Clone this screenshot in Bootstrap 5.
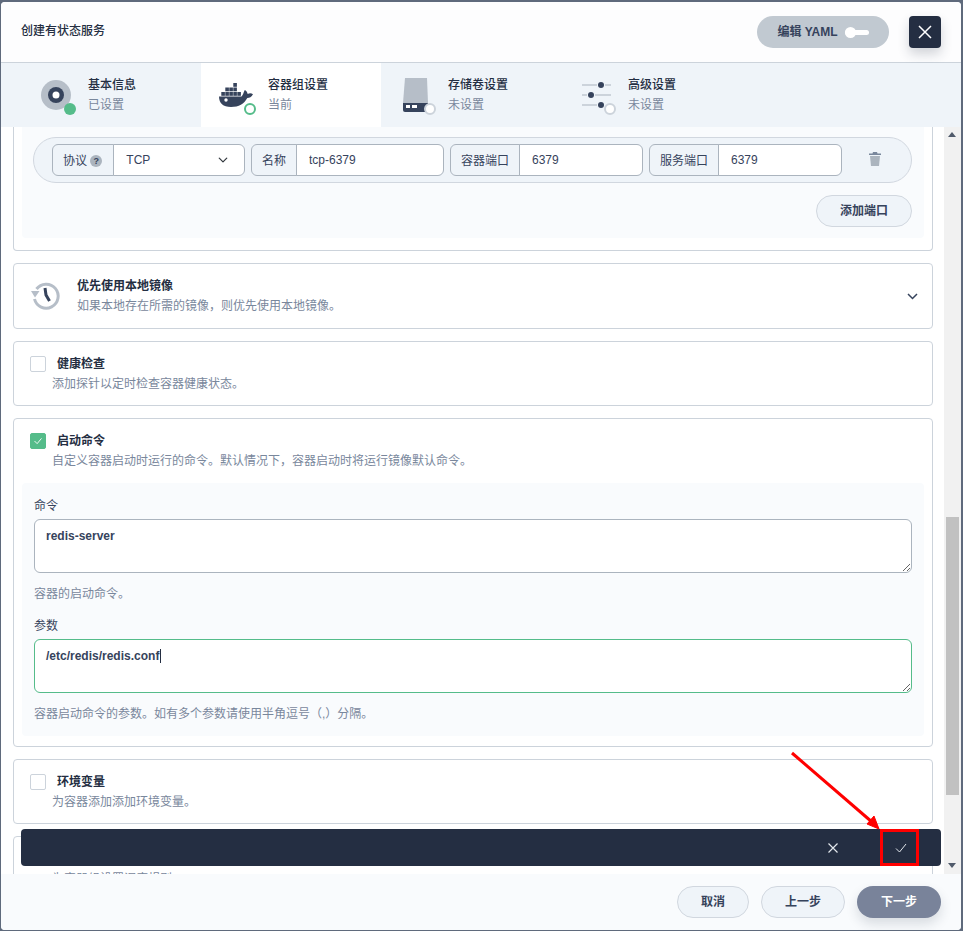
<!DOCTYPE html>
<html lang="zh-CN">
<head>
  <meta charset="UTF-8">
  <title>创建有状态服务</title>
  <link href="https://cdn.jsdelivr.net/npm/bootstrap@5.3.2/dist/css/bootstrap.min.css" rel="stylesheet">
  <style>
    html, body { height: 100%; overflow: hidden; }
    body {
      margin: 0;
      background: #5f6a7c;
      color: #242e42;
      font-family: "Liberation Sans", "Noto Sans CJK SC", sans-serif;
      font-size: 12px;
      line-height: 20px;
    }
    .shell {
      position: relative;
      display: flex;
      flex-direction: column;
      width: 960px;
      height: 928px;
      margin: 2px 0 0 1px;
      background: #fff;
      border-radius: 4px;
      overflow: hidden;
    }

    /* header */
    .top-bar { height: 61px; padding: 14px 20px 0 20px; background: #fdfdfe; border-bottom: 1px solid #ccd3db; flex: none; }
    .top-title { font-weight: 500; line-height: 30px; }
    .top-actions { gap: 20px; }
    .yaml-btn { width: 132px; height: 32px; border-radius: 16px; background: #c1c9d1; color: #36435c; font-weight: 600; gap: 7px; }
    .yaml-switch { position: relative; display: block; width: 24px; height: 5px; background: #fff; border-radius: 3px; }
    .yaml-switch::before { content: ""; position: absolute; left: 0; top: -3px; width: 11px; height: 11px; border-radius: 50%; background: #fff; }
    .close-btn { width: 32px; height: 32px; border-radius: 4px; background: #242e42; box-shadow: 0 6px 12px rgba(36, 46, 66, .2); }

    /* steps */
    .step-bar { height: 64px; padding-left: 20px; background: #eff4f9; flex: none; }
    .step-tab { width: 180px; height: 64px; padding-left: 17px; gap: 13px; }
    .step-tab.is-on { background: #fff; }
    .step-icon { width: 37px; height: 40px; flex: none; margin-top: 14px; overflow: visible; }
    .step-text { padding-top: 12px; }
    .step-name { font-weight: 500; }
    .step-state { color: #79879c; }

    /* scrolling body */
    .body-wrap { position: relative; flex: 1 1 auto; min-height: 0; }
    .body-scroll { flex: 1 1 auto; min-width: 0; padding: 0 11px 0 12px; overflow: hidden; }
    .fake-scroll { position: relative; width: 17px; flex: none; background: #f1f1f1; }
    .fake-thumb { position: absolute; left: 2px; right: 2px; top: 390px; height: 278px; background: #c1c1c1; }
    .arrow-up, .arrow-down { position: absolute; left: 4px; width: 0; height: 0; border-left: 4px solid transparent; border-right: 4px solid transparent; }
    .arrow-up { top: 5px; border-bottom: 5px solid #505a6b; }
    .arrow-down { bottom: 6px; border-top: 5px solid #505a6b; }

    .box { border: 1px solid #ccd3db; border-radius: 4px; margin-bottom: 12px; background: #fff; }
    .box-first { border-top: 0; border-radius: 0 0 4px 4px; padding: 0 8px 12px; margin-bottom: 12px; }
    .inner-panel { background: #f9fbfd; border-radius: 0 0 4px 4px; padding: 10px 12px 11px 11px; }
    .port-pill { height: 46px; padding: 0 69px 0 18px; gap: 6px; background: #eff4f9; border: 1px solid #d1d7df; border-radius: 23px; position: relative; }
    .port-pill .input-group { flex: 1 1 0; width: auto; height: 32px; }
    .port-pill .input-group-text { padding: 2px 10px 0; font-size: 12px; background: #eff4f9; color: #36435c; border-color: #abb4be; line-height: 28px; }
    .port-pill .proto-label { padding-right: 11px; }
    .port-pill .form-control, .port-pill .form-select { height: 32px; min-height: 0; padding: 0 12px; font-size: 12px; color: #36435c; border-color: #abb4be; box-shadow: none; }
    .port-pill .form-select { background-position: right 15px center; background-size: 12px 10px; }
    .help-dot { display: inline-block; width: 12px; height: 12px; border-radius: 50%; background: #abb4be; color: #36435c; font-size: 9px; line-height: 12px; text-align: center; font-weight: 700; vertical-align: -1px; }
    .trash-at { position: absolute; right: 30px; top: 14px; display: block; }
    .soft-btn { height: 32px; border-radius: 16px; background: #eff4f9; border: 1px solid #d1d7df; color: #36435c; font-size: 12px; font-weight: 600; padding: 0; line-height: 30px; }
    .soft-btn:hover { background: #eff4f9; color: #36435c; border-color: #d1d7df; }
    .add-btn { width: 96px; margin-top: 12px; }
    .cancel-btn { width: 72px; }
    .prev-btn { width: 84px; }

    .row-title { font-weight: 600; }
    .row-desc { color: #79879c; }
    .local-box { height: 66px; padding: 12px 17px 0 16px; }
    .history-icon { flex: none; margin: 4px 15px 0 0; }
    .fold-icon { margin: 17px -3px 0 0; }
    .check-box { padding: 12px 16px 0 16px; height: 65px; }
    .check-box .form-check-input { width: 16px; height: 16px; margin: 2px 11px 0 0; border-radius: 2px; border-color: #ccd3db; box-shadow: none; flex: none; }
    .check-box .form-check-input:checked {
      background-color: #55bc8a;
      border-color: #55bc8a;
      background-image: url("data:image/svg+xml,%3csvg xmlns='http://www.w3.org/2000/svg' viewBox='0 0 16 16'%3e%3cpath fill='none' stroke='%23fff' stroke-width='1' d='M4 8l3 3 5-6'/%3e%3c/svg%3e");
    }
    .check-desc { margin: 0 0 0 22px; }
    .cmd-box { height: 329px; padding: 0; }
    .cmd-head { height: auto; }
    .cmd-panel { margin: 12px 8px 0; padding: 12px 12px 0 12px; height: 253px; background: #f9fbfd; border-radius: 4px; }
    .cmd-panel .form-label { font-size: 12px; color: #36435c; margin-bottom: 3px; display: block; }
    .cmd-panel .form-label.first-label { padding-top: 1px; }
    .cmd-panel .form-control { height: 54px; min-height: 0; padding: 6px 11px; font-size: 12px; font-weight: 600; color: #36435c; border-color: #abb4be; box-shadow: none; line-height: 20px; }
    .cmd-panel .is-typing { border-color: #55bc8a; }
    .cmd-panel .form-text { margin: 11px 0 12px; font-size: 12px; color: #79879c; line-height: 20px; }
    .caret-wrap { position: relative; }
    .caret-line { position: absolute; left: 126px; top: 10px; width: 1px; height: 14px; background: #242e42; }
    .last-box { height: 60px; margin-bottom: 0; }
    .check-box.last-box .form-check-input { margin-top: 0; }

    /* dark confirm bar */
    .confirm-bar { position: absolute; left: 20px; top: 702px; width: 920px; height: 37px; background: #242e42; border-radius: 4px; z-index: 2; padding-right: 34px; gap: 57px; }

    /* footer */
    .foot-bar { height: 56px; padding: 12px 20px 0 0; gap: 12px; background: #f9fbfd; flex: none; }
    .next-btn { width: 84px; height: 32px; border-radius: 16px; background: #79839a; border: 0; color: #fff; font-size: 12px; font-weight: 600; box-shadow: 0 6px 12px rgba(36, 46, 66, .15); padding: 0; }
    .note-layer { position: absolute; left: 0; top: 0; width: 963px; height: 931px; pointer-events: none; z-index: 5; }
  </style>
</head>
<body>

<div class="shell">
  <!-- Header -->
  <div class="top-bar d-flex justify-content-between">
    <div class="top-title">创建有状态服务</div>
    <div class="top-actions d-flex ms-auto">
      <div class="yaml-btn d-flex align-items-center justify-content-center">
        <span>编辑 YAML</span>
        <span class="yaml-switch"></span>
      </div>
      <div class="close-btn d-flex align-items-center justify-content-center">
        <svg width="14" height="14" viewBox="0 0 14 14"><path d="M1 1 L13 13 M13 1 L1 13" stroke="#fff" stroke-width="1.5" fill="none"/></svg>
      </div>
    </div>
  </div>

  <!-- Steps -->
  <div class="step-bar d-flex">
    <div class="step-tab d-flex">
      <svg class="step-icon" viewBox="0 0 37 40">
        <circle cx="18" cy="18" r="15" fill="#b6bec8"/>
        <circle cx="18" cy="18" r="8" fill="#36435c"/>
        <circle cx="18" cy="18" r="3.5" fill="#fff"/>
        <circle cx="32" cy="32" r="6" fill="#55bc8a"/>
      </svg>
      <div class="step-text">
        <div class="step-name">基本信息</div>
        <div class="step-state">已设置</div>
      </div>
    </div>
    <div class="step-tab d-flex is-on">
      <svg class="step-icon" viewBox="0 0 37 40">
        <g fill="#36435c">
          <rect x="15.300" y="6" width="3.600" height="3.800"/>
          <rect x="7.300" y="10.500" width="3.600" height="3.800"/><rect x="11.300" y="10.500" width="3.600" height="3.800"/><rect x="15.300" y="10.500" width="3.600" height="3.800"/>
          <rect x="3.300" y="15" width="3.600" height="3.800"/><rect x="7.300" y="15" width="3.600" height="3.800"/><rect x="11.300" y="15" width="3.600" height="3.800"/><rect x="15.300" y="15" width="3.600" height="3.800"/><rect x="19.300" y="15" width="3.600" height="3.800"/>
          <path d="M1 19.500 H23.500 C25 18 25.500 15.500 26.800 13 C28.500 14 29.500 15.500 29.700 17 C31.500 16 33.500 16.200 35 17.200 C33.500 20 31.500 21 29.300 21 C26 27 21 30 13 30 C5 30 1 26 1 19.500 Z"/>
        </g>
        <circle cx="8" cy="23" r="1.700" fill="#fff"/>
        <circle cx="32" cy="32" r="5" fill="#fff" stroke="#55bc8a" stroke-width="2"/>
      </svg>
      <div class="step-text">
        <div class="step-name">容器组设置</div>
        <div class="step-state">当前</div>
      </div>
    </div>
    <div class="step-tab d-flex">
      <svg class="step-icon" viewBox="0 0 37 40">
        <path d="M7 1 H29 L30 26 H5 Z" fill="#b6bec8"/>
        <path d="M5 26 H30 V33 Q30 35 28 35 H7 Q5 35 5 33 Z" fill="#36435c"/>
        <rect x="8" y="28" width="4" height="3" fill="#fff"/><rect x="14" y="28" width="5" height="3" fill="#fff"/>
        <circle cx="32" cy="32" r="5" fill="#fff" stroke="#ccd3db" stroke-width="2"/>
      </svg>
      <div class="step-text">
        <div class="step-name">存储卷设置</div>
        <div class="step-state">未设置</div>
      </div>
    </div>
    <div class="step-tab d-flex">
      <svg class="step-icon" viewBox="0 0 37 40">
        <g stroke="#ccd3db" stroke-width="2" fill="none">
          <path d="M4 8 H19 M27 8 H33"/><path d="M4 18 H9 M17 18 H33"/><path d="M4 28 H19"/>
        </g>
        <circle cx="23" cy="8" r="3" fill="#36435c"/>
        <circle cx="13" cy="18" r="3" fill="#36435c"/>
        <circle cx="23" cy="28" r="3" fill="#36435c"/>
        <circle cx="32" cy="32" r="5" fill="#fff" stroke="#ccd3db" stroke-width="2"/>
      </svg>
      <div class="step-text">
        <div class="step-name">高级设置</div>
        <div class="step-state">未设置</div>
      </div>
    </div>
  </div>

  <!-- Body -->
  <div class="body-wrap d-flex">
    <div class="body-scroll">

      <div class="box box-first">
        <div class="inner-panel">
          <div class="port-pill d-flex align-items-center">
            <div class="input-group">
              <span class="input-group-text proto-label">协议&nbsp;<span class="help-dot">?</span></span>
              <select class="form-select"><option>TCP</option></select>
            </div>
            <div class="input-group">
              <span class="input-group-text">名称</span>
              <input class="form-control" value="tcp-6379">
            </div>
            <div class="input-group">
              <span class="input-group-text">容器端口</span>
              <input class="form-control" value="6379">
            </div>
            <div class="input-group">
              <span class="input-group-text">服务端口</span>
              <input class="form-control" value="6379">
            </div>
            <svg class="trash-at" width="12" height="14" viewBox="0 0 12 14"><path d="M4 0 H8 L8.500 1.500 H12 V3 H0 V1.500 H3.500 Z" fill="#79879c"/><path d="M1 4 H11 L10 14 H2 Z" fill="#abb4be"/></svg>
          </div>
          <div class="d-flex justify-content-end">
            <button class="btn soft-btn add-btn">添加端口</button>
          </div>
        </div>
      </div>

      <div class="box local-box d-flex align-items-start">
        <svg class="history-icon" width="32" height="32" viewBox="0 0 32 32">
          <path d="M6.500 9 A12 12 0 1 1 4.500 19" fill="none" stroke="#b6bec8" stroke-width="3"/>
          <path d="M1 11 L9.500 11 L5 17.500 Z" fill="#b6bec8"/>
          <path d="M15 8 L16 15 L19.500 21" fill="none" stroke="#36435c" stroke-width="3"/>
        </svg>
        <div class="flex-grow-1">
          <div class="row-title">优先使用本地镜像</div>
          <div class="row-desc">如果本地存在所需的镜像，则优先使用本地镜像。</div>
        </div>
        <svg class="fold-icon" width="11" height="7" viewBox="0 0 11 7"><path d="M1 1 L5.500 5.500 L10 1" fill="none" stroke="#36435c" stroke-width="1.500"/></svg>
      </div>

      <div class="box check-box">
        <div class="d-flex">
          <input class="form-check-input" type="checkbox">
          <div class="row-title">健康检查</div>
        </div>
        <div class="row-desc check-desc">添加探针以定时检查容器健康状态。</div>
      </div>

      <div class="box cmd-box">
        <div class="check-box cmd-head">
          <div class="d-flex">
            <input class="form-check-input" type="checkbox" checked>
            <div class="row-title">启动命令</div>
          </div>
          <div class="row-desc check-desc">自定义容器启动时运行的命令。默认情况下，容器启动时将运行镜像默认命令。</div>
        </div>
        <div class="cmd-panel">
          <label class="form-label first-label">命令</label>
          <textarea class="form-control">redis-server</textarea>
          <div class="form-text">容器的启动命令。</div>
          <label class="form-label">参数</label>
          <div class="caret-wrap">
            <textarea class="form-control is-typing">/etc/redis/redis.conf</textarea>
            <span class="caret-line"></span>
          </div>
          <div class="form-text">容器启动命令的参数。如有多个参数请使用半角逗号（,）分隔。</div>
        </div>
      </div>

      <div class="box check-box">
        <div class="d-flex">
          <input class="form-check-input" type="checkbox">
          <div class="row-title">环境变量</div>
        </div>
        <div class="row-desc check-desc">为容器添加添加环境变量。</div>
      </div>

      <div class="box check-box last-box">
        <div class="d-flex">
          <input class="form-check-input" type="checkbox">
          <div class="row-title">容器组调度</div>
        </div>
        <div class="row-desc check-desc">为容器组设置调度规则。</div>
      </div>
    </div>

    <div class="fake-scroll">
      <span class="arrow-up"></span>
      <span class="fake-thumb"></span>
      <span class="arrow-down"></span>
    </div>

    <div class="confirm-bar d-flex align-items-center justify-content-end">
      <svg width="10" height="10" viewBox="0 0 10 10"><path d="M.5 .5 L9.500 9.500 M9.500 .5 L.5 9.500" stroke="#e3e7ec" stroke-width="1.200" fill="none"/></svg>
      <svg width="12" height="10" viewBox="0 0 12 10"><path d="M1 5.500 L4.500 9 L11 1" stroke="#e3e7ec" stroke-width="1" fill="none"/></svg>
    </div>
  </div>

  <!-- Footer -->
  <div class="foot-bar d-flex justify-content-end">
    <button class="btn soft-btn cancel-btn">取消</button>
    <button class="btn soft-btn prev-btn">上一步</button>
    <button class="btn next-btn">下一步</button>
  </div>
</div>

<!-- Red annotation drawn on the screenshot -->
<svg class="note-layer" viewBox="0 0 963 931">
  <path d="M792 753 L872 822" stroke="#f00" stroke-width="3" fill="none"/>
  <path d="M879 829 L867 824 L874 816 Z" fill="#f00" stroke="#f00"/>
  <rect x="881.500" y="830.500" width="36" height="34" fill="none" stroke="#f00" stroke-width="3"/>
</svg>

<script src="https://cdn.jsdelivr.net/npm/bootstrap@5.3.2/dist/js/bootstrap.bundle.min.js"></script>
</body>
</html>
